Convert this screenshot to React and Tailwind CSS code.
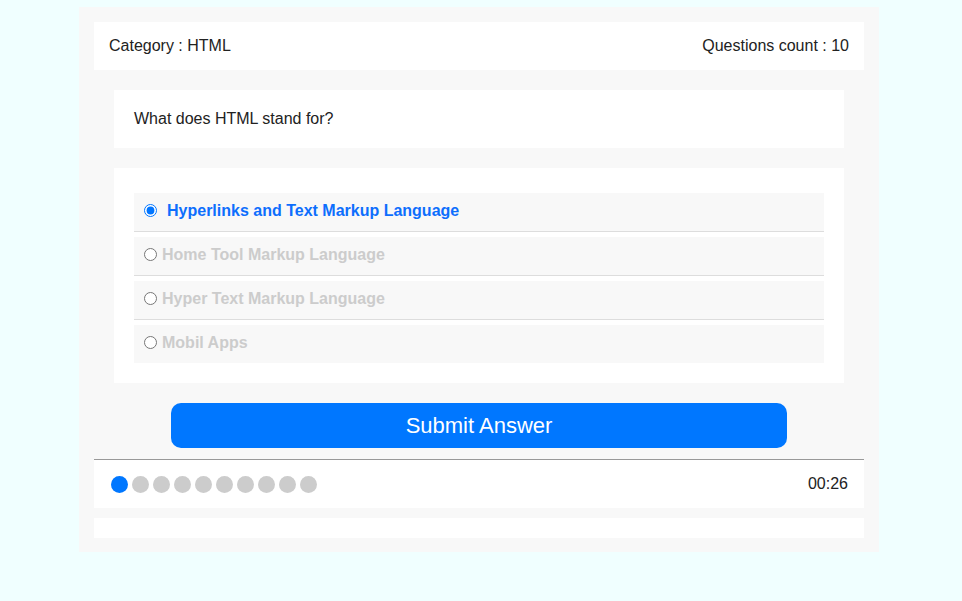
import React, { useState } from 'react';

const options = [
  'Hyperlinks and Text Markup Language',
  'Home Tool Markup Language',
  'Hyper Text Markup Language',
  'Mobil Apps',
];

export default function App() {
  const [selected, setSelected] = useState(0);

  return (
    <div className="min-h-screen bg-[#f0ffff] pt-[7px] font-['Liberation_Sans',Arial,sans-serif] text-[#222]">
      <div className="w-[800px] ml-[calc(50%-402px)] bg-[#f8f8f8] p-[15px] pb-[14px]">
        {/* Header */}
        <div className="h-[48px] bg-white px-[15px] flex items-center justify-between text-[16px]">
          <span>Category : HTML</span>
          <span>Questions count : 10</span>
        </div>

        {/* Question */}
        <div className="mx-[20px] mt-[20px] h-[58px] bg-white px-[20px] flex items-center text-[16px]">
          What does HTML stand for?
        </div>

        {/* Options */}
        <div className="mx-[20px] mt-[20px] bg-white px-[20px] pt-[20px] pb-[20px]">
          {options.map((opt, i) => {
            const active = i === selected;
            return (
              <label
                key={opt}
                onClick={() => setSelected(i)}
                className={`box-content flex items-center h-[35px] mt-[5px] pb-[3px] bg-[#f8f8f8] pl-[10px] cursor-pointer font-bold text-[16px] ${
                  i < options.length - 1 ? 'border-b border-[#ddd]' : ''
                } ${active ? 'text-[#0d6efd]' : 'text-[#ccc]'}`}
              >
                <input
                  type="radio"
                  name="answer"
                  checked={active}
                  onChange={() => setSelected(i)}
                  className="m-0 w-[13px] h-[13px] accent-[#0075ff]"
                />
                <span className={active ? 'ml-[10px]' : 'ml-[5px]'}>{opt}</span>
              </label>
            );
          })}
        </div>

        {/* Submit */}
        <button className="block w-[616px] h-[45px] mx-auto mt-[20px] rounded-[10px] bg-[#0077ff] text-white text-[22px]">
          Submit Answer
        </button>

        {/* Progress */}
        <div className="mt-[11px] border-t border-[#999] h-[49px] bg-white pl-[17px] pr-[16px] flex items-center justify-between">
          <div className="flex gap-[4px]">
            {Array.from({ length: 10 }).map((_, i) => (
              <span
                key={i}
                className={`w-[17px] h-[17px] rounded-full ${i === 0 ? 'bg-[#0077ff]' : 'bg-[#ccc]'}`}
              />
            ))}
          </div>
          <span className="text-[16px]">00:26</span>
        </div>

        <div className="mt-[10px] h-[20px] bg-white" />
      </div>
    </div>
  );
}
